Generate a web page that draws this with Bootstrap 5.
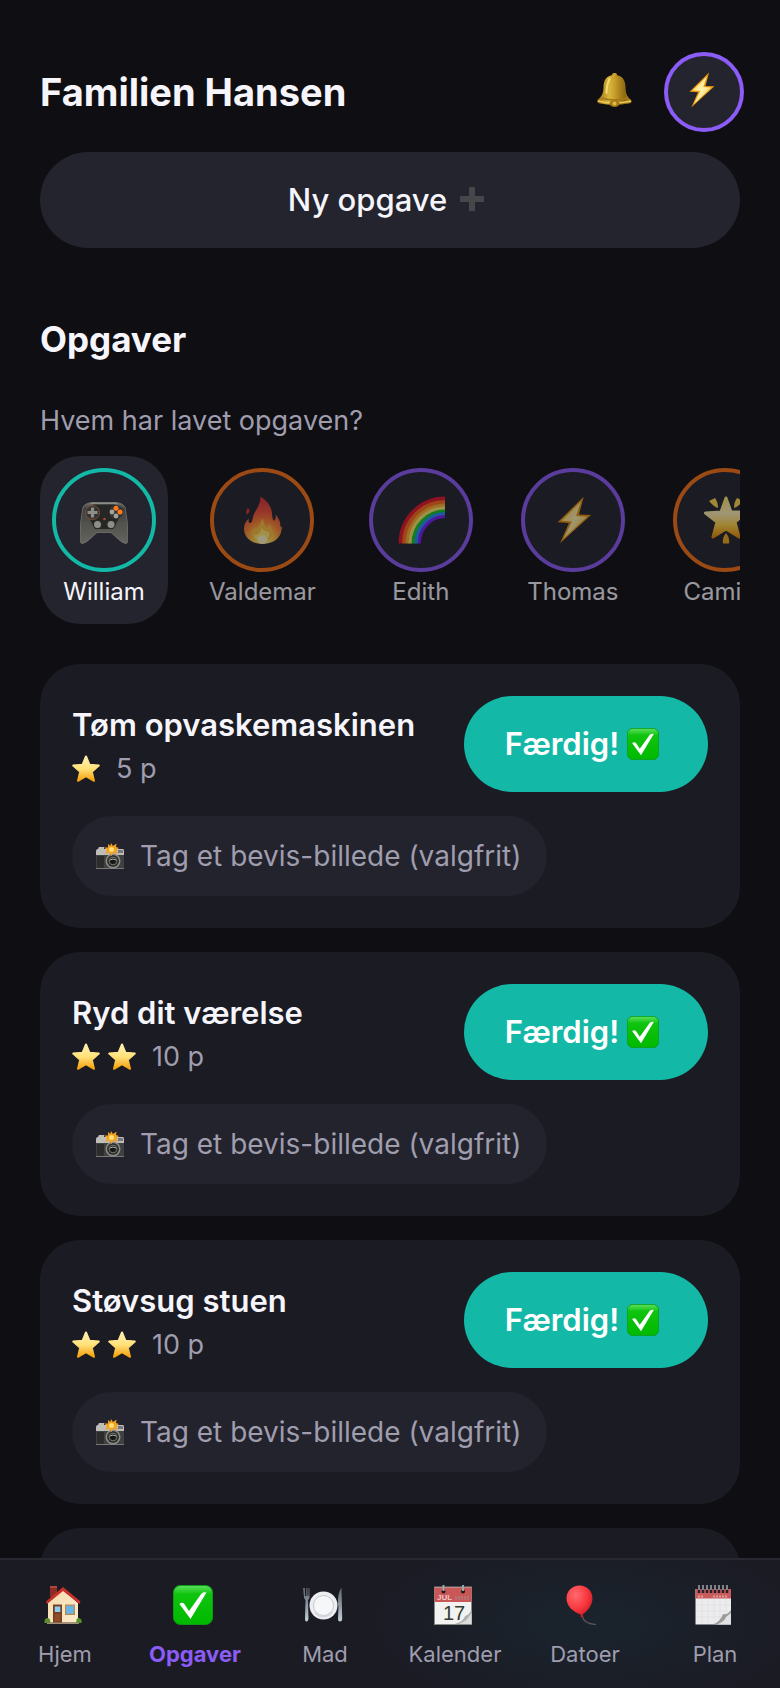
<!DOCTYPE html>
<html lang="da">
<head>
<meta charset="utf-8">
<meta name="viewport" content="width=device-width, initial-scale=1">
<title>Familien Hansen</title>
<link href="https://cdn.jsdelivr.net/npm/bootstrap@5.3.0/dist/css/bootstrap.min.css" rel="stylesheet">
<style>
  :root { --ground: #0f0e13; --surface: #1b1b24; --raised: #24242e; --ink: #f6f5fb; --muted: #9f9dae; --teal: #14b8a6; --violet: #8b5cf6; --orange: #f97316; }
  body { background: var(--ground); color: var(--ink); font-family: Inter, "Liberation Sans", sans-serif; }
  svg { display: block; flex: none; }
  button { font: inherit; color: inherit; border: 0; }
  .app-main { min-height: 0; padding: 52px 40px 0; }
  .app-title { font-size: 38px; line-height: 44px; font-weight: 700; }
  .app-header { margin-right: -4px; }
  .bell-btn { margin-right: 32px; padding: 0 0 4px; background: none; }
  .profile-btn { width: 80px; height: 80px; padding: 0 6px 4px 0; border: 4px solid var(--violet); background: var(--raised); }
  .new-task { height: 96px; margin-top: 20px; padding-top: 2px; font-size: 31px; font-weight: 500; background: var(--raised); gap: 13px; }
  .section-title { margin: 69px 0 0; font-size: 35px; line-height: 44px; font-weight: 700; }
  .question { margin: 44px 0 19px; font-size: 27px; line-height: 32px; color: var(--muted); }
  .member { padding: 12px 12px 16px; border-radius: 40px; background: none; opacity: .6; }
  .member.selected { background: var(--raised); opacity: 1; }
  .member-ring { width: 104px; height: 104px; border: 4px solid var(--violet); background: var(--raised); }
  .ring-teal { border-color: var(--teal); }
  .ring-orange { border-color: var(--orange); }
  .member-name { margin-top: 4px; padding: 0 5px; font-size: 24px; line-height: 32px; }
  .task-list { margin-top: 40px; }
  .task { padding: 32px; border-radius: 40px; background: var(--surface); min-height: 264px; }
  .task-title { margin: 9px 0 0; font-size: 31px; line-height: 40px; font-weight: 600; }
  .points { font-size: 27px; line-height: 32px; color: var(--muted); margin-top: 8px; }
  .done-btn { width: 244px; height: 96px; font-size: 31px; font-weight: 600; color: #fff; background: var(--teal); }
  .proof-btn { height: 80px; margin-top: 24px; padding: 0 26px 0 24px; gap: 16px; font-size: 28px; font-weight: 400; color: var(--muted); background: #23232d; }
  .tabbar { padding: 25px 0 20px; border-top: 2px solid #282831; background: radial-gradient(220px 90px at 75% 50%, #1a242d, #1b1b24); }
  .tab-link { flex: 1 1 0; gap: 15px; font-size: 22px; line-height: 28px; color: var(--muted); text-decoration: none; }
  .tab-link.current { color: var(--violet); font-weight: 700; }
</style>
</head>
<body>
<svg width="0" height="0" class="position-absolute" aria-hidden="true">
  <defs>
    <linearGradient id="gBell" x1="0" x2="1" y1="0" y2="0"><stop offset="0" stop-color="#9a6d12"/><stop offset=".35" stop-color="#d9b63c"/><stop offset=".5" stop-color="#c9a02b"/><stop offset=".8" stop-color="#8f6a12"/><stop offset="1" stop-color="#b98a1e"/></linearGradient>
    <linearGradient id="gStar" x1="0" x2="0" y1="0" y2="1"><stop offset="0" stop-color="#fff0b0"/><stop offset=".5" stop-color="#ffe27a"/><stop offset="1" stop-color="#f59f0a"/></linearGradient>
    <linearGradient id="gGlow" x1="0" x2="0" y1="0" y2="1"><stop offset="0" stop-color="#ffe96c"/><stop offset=".4" stop-color="#fff0b8"/><stop offset=".7" stop-color="#ffd445"/><stop offset="1" stop-color="#e88d08"/></linearGradient>
    <linearGradient id="gBolt" x1="0" x2="1" y1="0" y2="1"><stop offset="0" stop-color="#ffc93a"/><stop offset=".5" stop-color="#fff3b0"/><stop offset="1" stop-color="#ffb320"/></linearGradient>
    <linearGradient id="gCheck" x1="0" x2="0" y1="0" y2="1"><stop offset="0" stop-color="#5fe05f"/><stop offset=".22" stop-color="#0fc40f"/><stop offset="1" stop-color="#00b900"/></linearGradient>
    <radialGradient id="gFire" gradientUnits="userSpaceOnUse" cx="25" cy="44" r="40"><stop offset="0" stop-color="#fff6b0"/><stop offset=".2" stop-color="#ffd84a"/><stop offset=".45" stop-color="#ff8a33"/><stop offset=".7" stop-color="#f2513a"/><stop offset="1" stop-color="#d93636"/></radialGradient>
    <linearGradient id="gPad" x1="0" x2="0" y1="0" y2="1"><stop offset="0" stop-color="#77776f"/><stop offset=".15" stop-color="#3d3d3b"/><stop offset=".5" stop-color="#50504c"/><stop offset="1" stop-color="#65655f"/></linearGradient>
    <radialGradient id="gBalloon" cx=".35" cy=".3" r=".75"><stop offset="0" stop-color="#ff6a6e"/><stop offset=".6" stop-color="#f8383f"/><stop offset="1" stop-color="#cf1a24"/></radialGradient>
    <linearGradient id="gWall" x1="0" x2="1" y1="0" y2="1"><stop offset="0" stop-color="#f3dcae"/><stop offset="1" stop-color="#fdeccb"/></linearGradient>
    <linearGradient id="gSteel" x1="0" x2="0" y1="0" y2="1"><stop offset="0" stop-color="#5d666e"/><stop offset=".5" stop-color="#8a97a0"/><stop offset="1" stop-color="#c5d2da"/></linearGradient>
  </defs>
  <symbol id="bell" viewBox="0 0 36 36">
    <rect x="16" y="1" width="5" height="4" rx="2" fill="#c8a23a"/>
    <path d="M18.500 3C10.500 3 7.500 8.500 7.500 15C7.500 22 5 25 1.500 28C.5 30 1.500 31 4 31.500Q18 34 33 31.500C35.500 31 36 30 35 28C31.500 25 29.500 22 29.500 15C29.500 8.500 26.500 3 18.500 3Z" fill="url(#gBell)"/>
    <path d="M13.500 7Q10.500 13 10.500 21" stroke="#f1dc74" stroke-width="2" fill="none" stroke-linecap="round"/>
    <path d="M6 26Q18 30 31 26" stroke="#a27818" stroke-width="1.500" fill="none"/><path d="M2 29Q18 33 35 29" stroke="#ebc95a" stroke-width="1.300" fill="none"/>
    <ellipse cx="18.500" cy="31.500" rx="5" ry="3.500" fill="#a87a16"/><circle cx="18.500" cy="31.500" r="2" fill="#e0bb4b"/>
  </symbol>
  <symbol id="bolt" viewBox="0 0 48 48">
    <path d="M34.700.7L8.700 26.300L20 27L11 47.300L42 19L30 18.500Z" fill="#e8950e"/>
    <path d="M32 5.500L12.500 24.700L23 25.400L14.500 42.500L38 20.700L27 20Z" fill="url(#gBolt)"/>
  </symbol>
  <symbol id="pad" viewBox="0 0 48 48">
    <path d="M3 11Q6 6.500 13 6.500H35Q42 6.500 45 11Q48 25 48 43Q48 48 45.500 47.500Q42 47 37 42L31 36.500H17L11 42Q6 47 2.500 47.500Q0 48 0 43Q0 25 3 11Z" fill="url(#gPad)" stroke="#74746e" stroke-width=".8"/>
    <path d="M13 8.500H35L39 14L38 24L33 33H15L9 22Z" fill="#262625"/><path d="M11 7.200H37" stroke="#9c9c94" stroke-width="1"/>
    <circle cx="12.500" cy="16.500" r="7" fill="#333" stroke="#8b5433" stroke-width=".9"/>
    <path d="M12.500 11.500V21.500M7.500 16.500H17.500" stroke="#8e8e88" stroke-width="3.200"/>
    <circle cx="36" cy="16" r="7" fill="#333"/><circle cx="36" cy="12.300" r="2.500" fill="#ff7a1c"/><circle cx="40" cy="16" r="2.500" fill="#ff7a1c"/><circle cx="32" cy="16" r="2.400" fill="#a3a39c"/><circle cx="36" cy="20" r="2.400" fill="#a3a39c"/>
    <circle cx="17.500" cy="28.500" r="4.700" fill="#292929"/><circle cx="17.500" cy="28.500" r="3.500" fill="#8e8e88"/><circle cx="31" cy="28.500" r="4.700" fill="#292929"/><circle cx="31" cy="28.500" r="3.500" fill="#8e8e88"/><circle cx="24.500" cy="23" r="1.300" fill="#a64c2c"/>
  </symbol>
  <symbol id="fire" viewBox="0 0 48 48">
    <path d="M22.500.5C28 4 33 9 34 17C34 20 34.500 23 36 25C38 23 38 20 37.500 18C42 24 43 28 42 31C44 29 44 32 43.500 34C42.500 43 34 48 24 48C13 48 5.500 41 6 32C6 28 8 25 11 22.500C10 26 11 27 12.500 27C15 26 14 21 17 16C20 11 22.500 7 22.500.5Z" fill="url(#gFire)"/>
    <path d="M10 12C13 15 11 17 9 18.500C7.500 17 8 14 10 12Z" fill="#d5382e"/>
    <path d="M24 22C27 27 26 30 29 32C31 31 31 29 31 27C35 33 35 37 33 41C30 47 17 47 14 40C12 36 15 34 17 32C19 34 19 34 20 31C21 28 24 26 24 22Z" fill="#ffbd42"/>
    <path d="M24 32Q27 36 31 36Q33 42 25 47Q16 45 16 39Q21 40 24 32Z" fill="#ffe96a"/><ellipse cx="24.500" cy="43.500" rx="5" ry="4.200" fill="#fff8c0"/>
  </symbol>
  <symbol id="rainbow" viewBox="0 0 48 48">
    <g fill="none" stroke-width="4">
      <path d="M3.500 47.500A44.500 45 0 0 1 48 2.500" stroke="#e3162a"/><path d="M7 47.500A41 41.500 0 0 1 48 6" stroke="#ff6a1c"/>
      <path d="M10.500 47.500A37.500 38 0 0 1 48 9.500" stroke="#ffac30"/><path d="M13.500 47.500A34.500 35 0 0 1 48 12.500" stroke="#ffe86e"/>
      <path d="M16.500 47.500A31.500 32 0 0 1 48 15.500" stroke="#16cb22"/><path d="M19.500 47.500A28.500 29.500 0 0 1 48 18" stroke="#2390f8"/>
      <path d="M22.300 47.500A25.700 27 0 0 1 48 20.500" stroke="#7b1eff" stroke-width="3"/>
    </g>
  </symbol>
  <symbol id="glow" viewBox="0 0 48 48">
    <path d="M25 2L30 16H46L34 26L38 41L25 33L12 41L16 26L4.500 17L20 16Z" fill="url(#gGlow)" stroke="url(#gGlow)" stroke-width="3" stroke-linejoin="round"/>
    <g fill="#ffd84c"><path d="M8 5L14 2Q17 6 17 12Q13 11 8 5Z"/><path d="M42 5L36 2Q33 6 33 12Q37 11 42 5Z"/><path d="M25 37Q29 42 28 47.500H22Q21 42 25 37Z" fill="#f4aa20"/></g>
  </symbol>
  <symbol id="star" viewBox="0 0 28 28">
    <path d="M14 1.500L17.500 9.800L26.800 10.600L19.800 16.700L22 25.800L14 21.200L6 25.800L8.200 16.700L1.200 10.600L10.500 9.800Z" fill="url(#gStar)" stroke="url(#gStar)" stroke-width="2" stroke-linejoin="round"/>
  </symbol>
  <symbol id="check" viewBox="0 0 40 40">
    <rect x=".5" y=".5" width="39" height="39" rx="7" fill="url(#gCheck)" stroke="#0a9c12"/>
    <path d="M6.500 19Q8.500 17 11 18.500L16 26L28.500 8.500Q31 6.500 33.500 7.500L17.500 34Z" fill="#fff"/>
  </symbol>
  <symbol id="camera" viewBox="0 0 28 28">
    <rect y="8" width="28" height="19" rx="1.500" fill="#3f403f"/><path d="M0 9Q0 7 2 7L3 5H8V7H27Q28 7 28 9V13H0Z" fill="#bdbdb9"/><rect x="22" y="8" width="5" height="3" fill="#777"/>
    <rect x="1" y="14" width="7" height="12" fill="#2b2c2b"/><path d="M0 26.500H28" stroke="#777" stroke-width="1"/>
    <circle cx="17" cy="19" r="7.500" fill="#8b8c8a"/><circle cx="17" cy="19" r="6" fill="#303230"/><circle cx="17" cy="19" r="3.800" fill="#171917" stroke="#73756f" stroke-width="1"/><path d="M14 18Q17 16 20 18" stroke="#b0b2ad" stroke-width="1" fill="none"/>
    <path d="M15 1L17 4L20.500 1.500L20 5L23 6L20 8L22 12L17.500 10.500L15.500 14L13.500 10.500L9 12L11 8L8 5.500L12 5.500L12 2L14.300 4Z" fill="#f5a01c"/><circle cx="15.500" cy="7.500" r="2.500" fill="#ffe072"/>
  </symbol>
  <symbol id="house" viewBox="0 0 40 40">
    <rect x="7" y="1" width="7" height="11" fill="#8a2d25"/><path d="M7 1H14V3H7Z" fill="#b5443a"/>
    <path d="M5 18L20 5L35 18V38H5Z" fill="url(#gWall)"/><path d="M4 38H36" stroke="#a18f77" stroke-width="2"/>
    <path d="M20 2L37.500 16.500L36.500 19L20 6L4 19L3 16.500Z" fill="#c9302c"/>
    <rect x="10" y="19.500" width="9" height="18" fill="#7a3f22"/><rect x="11.800" y="21.500" width="5.500" height="5.500" fill="#8ccdf5"/><rect x="11.800" y="29" width="5.500" height="7" fill="#8f4d2c"/>
    <rect x="22" y="19.500" width="10" height="10.500" fill="#b98a4e"/><rect x="23.200" y="20.700" width="7.600" height="8" fill="#69b5ea"/>
    <path d="M1.500 38Q1 33 5 33Q8 34 7 38ZM33.500 38Q32.500 33 36 33Q39.500 34 38.500 38Z" fill="#58912c"/>
  </symbol>
  <symbol id="plate" viewBox="0 0 40 40">
    <circle cx="20.500" cy="20.500" r="14" fill="#eceef1"/><circle cx="20.500" cy="20.500" r="10" fill="#f6f7f9" stroke="#c3c7cd" stroke-width="1"/><path d="M12 27Q20 36 29 27" stroke="#d4d7dc" stroke-width="2" fill="none"/>
    <path d="M0 3L1 12Q1 14 2.500 15L2 34Q2 36.500 3.500 36.500T5.500 34L5 15Q6.500 14 6.500 12V3L5.500 3V11H4.500V3H3.300V11H2V3Z" fill="url(#gSteel)"/>
    <path d="M38.500 2.500Q34.500 8 35 20L35.500 21L35 34Q35 36.500 37 36.500T39.200 34Z" fill="url(#gSteel)"/>
  </symbol>
  <symbol id="balloon" viewBox="0 0 40 40">
    <path d="M19 31Q21 39 33 39.500" stroke="#5c5558" stroke-width="1.200" fill="none"/>
    <path d="M16.500.5C24 .5 29.500 6 29.500 13.500C29.500 20 24 27 19.500 29.500L20.500 32H17.500L18 29.700C10 27 3.500 21 3.500 13.500C3.500 6 9 .5 16.500.5Z" fill="url(#gBalloon)"/>
  </symbol>
  <symbol id="planner" viewBox="0 0 40 40">
    <rect x="2.500" y="4" width="35.500" height="35.500" fill="#ececee"/><rect x="2.500" y="4" width="35.500" height="9.500" fill="#c85b5c"/><path d="M5 11.500H11M20 11.500H35" stroke="#de9999" stroke-width="2" stroke-dasharray="2 1"/>
    <path d="M9 14V39M15 14V39M21 14V39M27 14V39M33 14V39M3 20H38M3 26H38M3 32H38" stroke="#e0e0e3" stroke-width=".7"/>
    <path d="M6 0V8M10 0V8M14 0V8M18 0V8M22 0V8M26 0V8M30 0V8M34 0V8" stroke="#252129" stroke-width="2.400"/><path d="M6 0V5M10 0V5M14 0V5M18 0V5M22 0V5M26 0V5M30 0V5M34 0V5" stroke="#a9acb2" stroke-width="1.400"/>
    <path d="M20 39.500Q28 36 30 29Q35 30 38 25V39.500Z" fill="#9b9b9c"/><path d="M24 39.500Q32 36 33 32L38 28V39.500Z" fill="#e2e2e4"/>
  </symbol>
</svg>

<div class="vh-100 d-flex flex-column overflow-hidden">
  <main class="app-main flex-grow-1 overflow-hidden">
    <header class="app-header d-flex align-items-center">
      <h1 class="app-title mb-0 me-auto">Familien Hansen</h1>
      <button type="button" class="bell-btn" aria-label="Notifikationer"><svg width="36" height="36"><use href="#bell"/></svg></button>
      <button type="button" class="profile-btn rounded-circle d-flex align-items-center justify-content-center" aria-label="Profil"><svg width="36" height="36"><use href="#bolt"/></svg></button>
    </header>
    <button type="button" class="new-task w-100 rounded-pill d-flex align-items-center justify-content-center">Ny opgave <svg class="me-2 mb-1" width="24" height="24" viewBox="0 0 24 24"><path d="M9 0h6v9h9v6h-9v9H9v-9H0V9h9z" fill="#46474b"/></svg></button>

    <h2 class="section-title">Opgaver</h2>
    <p class="question">Hvem har lavet opgaven?</p>
    <div class="d-flex gap-4 overflow-hidden">
      <button type="button" class="member selected d-flex flex-column align-items-center" aria-pressed="true"><span class="member-ring ring-teal rounded-circle d-flex align-items-center justify-content-center"><svg width="48" height="48"><use href="#pad"/></svg></span><span class="member-name">William</span></button>
      <button type="button" class="member d-flex flex-column align-items-center"><span class="member-ring ring-orange rounded-circle d-flex align-items-center justify-content-center"><svg width="48" height="48"><use href="#fire"/></svg></span><span class="member-name">Valdemar</span></button>
      <button type="button" class="member d-flex flex-column align-items-center"><span class="member-ring rounded-circle d-flex align-items-center justify-content-center"><svg width="48" height="48"><use href="#rainbow"/></svg></span><span class="member-name">Edith</span></button>
      <button type="button" class="member d-flex flex-column align-items-center"><span class="member-ring rounded-circle d-flex align-items-center justify-content-center"><svg width="48" height="48"><use href="#bolt"/></svg></span><span class="member-name">Thomas</span></button>
      <button type="button" class="member d-flex flex-column align-items-center"><span class="member-ring ring-orange rounded-circle d-flex align-items-center justify-content-center"><svg width="48" height="48"><use href="#glow"/></svg></span><span class="member-name">Camilla</span></button>
    </div>

    <div class="task-list d-flex flex-column gap-4">
      <article class="task">
        <div class="d-flex justify-content-between">
          <div>
            <h3 class="task-title">Tøm opvaskemaskinen</h3>
            <div class="points d-flex align-items-center gap-2"><svg width="28" height="28"><use href="#star"/></svg><span class="ms-2">5 p</span></div>
          </div>
          <button type="button" class="done-btn rounded-pill d-flex align-items-center justify-content-center gap-2">Færdig! <svg class="me-2" width="32" height="32"><use href="#check"/></svg></button>
        </div>
        <button type="button" class="proof-btn rounded-pill d-inline-flex align-items-center"><svg width="28" height="28"><use href="#camera"/></svg>Tag et bevis-billede (valgfrit)</button>
      </article>
      <article class="task">
        <div class="d-flex justify-content-between">
          <div>
            <h3 class="task-title">Ryd dit værelse</h3>
            <div class="points d-flex align-items-center gap-2"><svg width="28" height="28"><use href="#star"/></svg><svg width="28" height="28"><use href="#star"/></svg><span class="ms-2">10 p</span></div>
          </div>
          <button type="button" class="done-btn rounded-pill d-flex align-items-center justify-content-center gap-2">Færdig! <svg class="me-2" width="32" height="32"><use href="#check"/></svg></button>
        </div>
        <button type="button" class="proof-btn rounded-pill d-inline-flex align-items-center"><svg width="28" height="28"><use href="#camera"/></svg>Tag et bevis-billede (valgfrit)</button>
      </article>
      <article class="task">
        <div class="d-flex justify-content-between">
          <div>
            <h3 class="task-title">Støvsug stuen</h3>
            <div class="points d-flex align-items-center gap-2"><svg width="28" height="28"><use href="#star"/></svg><svg width="28" height="28"><use href="#star"/></svg><span class="ms-2">10 p</span></div>
          </div>
          <button type="button" class="done-btn rounded-pill d-flex align-items-center justify-content-center gap-2">Færdig! <svg class="me-2" width="32" height="32"><use href="#check"/></svg></button>
        </div>
        <button type="button" class="proof-btn rounded-pill d-inline-flex align-items-center"><svg width="28" height="28"><use href="#camera"/></svg>Tag et bevis-billede (valgfrit)</button>
      </article>
      <article class="task"></article>
    </div>
  </main>

  <nav class="tabbar d-flex">
    <a href="#hjem" class="tab-link d-flex flex-column align-items-center"><svg class="me-1" width="40" height="40"><use href="#house"/></svg>Hjem</a>
    <a href="#opgaver" class="tab-link current d-flex flex-column align-items-center" aria-current="page"><svg class="me-1" width="40" height="40"><use href="#check"/></svg>Opgaver</a>
    <a href="#mad" class="tab-link d-flex flex-column align-items-center"><svg class="me-1" width="40" height="40"><use href="#plate"/></svg>Mad</a>
    <a href="#kalender" class="tab-link d-flex flex-column align-items-center">
      <svg class="me-1" width="40" height="40" viewBox="0 0 40 40">
        <rect x="1.500" y="2" width="37" height="37.500" fill="#f2f2f0" stroke="#888a86"/><rect x="1.500" y="2.500" width="37" height="14.500" fill="#c95757"/>
        <path d="M22 13H36" stroke="#b97070" stroke-width="4" stroke-dasharray="2 1"/>
        <text x="4" y="15" font-family="Liberation Sans, sans-serif" font-size="8" font-weight="700" fill="#f1c5c5">JUL</text>
        <text x="10" y="35" font-family="Liberation Sans, sans-serif" font-size="20" fill="#333d33">17</text>
        <circle cx="10.500" cy="6.500" r="2" fill="#201818"/><circle cx="30" cy="6.500" r="2" fill="#201818"/><path d="M10.500 0V6M30 0V6" stroke="#9aa" stroke-width="2"/>
        <path d="M22 39Q31 36 32 31Q36 30 38.500 25V39Z" fill="#b0b0ae"/><path d="M26 39Q33 36 35 33L38.500 28V39Z" fill="#ddd"/>
      </svg>Kalender</a>
    <a href="#datoer" class="tab-link d-flex flex-column align-items-center"><svg class="me-1" width="40" height="40"><use href="#balloon"/></svg>Datoer</a>
    <a href="#plan" class="tab-link d-flex flex-column align-items-center"><svg class="me-1" width="40" height="40"><use href="#planner"/></svg>Plan</a>
  </nav>
</div>
<script src="https://cdn.jsdelivr.net/npm/bootstrap@5.3.0/dist/js/bootstrap.bundle.min.js"></script>
</body>
</html>
